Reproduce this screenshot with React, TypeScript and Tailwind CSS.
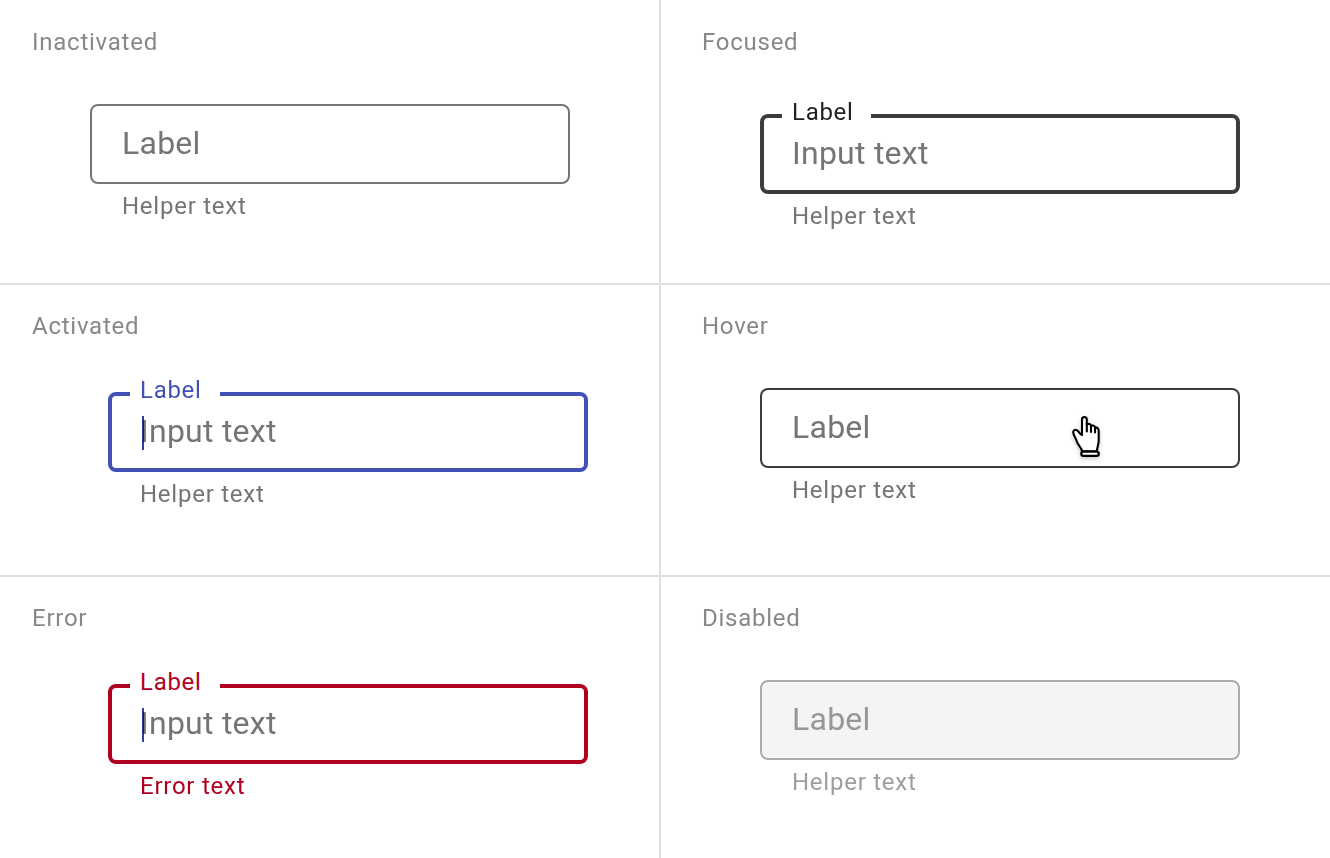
import type { ReactNode } from "react";
import { clsx } from "clsx";

type Tone = "inactive" | "focused" | "activated" | "hover" | "error" | "disabled";

const boxTone: Record<Tone, string> = {
  inactive: "border-2 border-[#757575]",
  focused: "border-4 border-[#3c3c3c]",
  activated: "border-4 border-[#3f51b5]",
  hover: "border-2 border-[#3c3c3c]",
  error: "border-4 border-[#b00020]",
  disabled: "border-2 border-[#acacac] bg-[#f4f4f4]",
};

const labelTone: Record<Tone, string> = {
  inactive: "",
  focused: "text-[#212121]",
  activated: "text-[#3f51b5]",
  hover: "",
  error: "text-[#b00020]",
  disabled: "",
};

const helperTone: Record<Tone, string> = {
  inactive: "text-[#757575]",
  focused: "text-[#757575]",
  activated: "text-[#757575]",
  hover: "text-[#757575]",
  error: "text-[#b00020]",
  disabled: "text-[#9e9e9e]",
};

function HandCursor() {
  return (
    <svg
      className="absolute top-[17px] left-[300px] h-[60px] w-[56px] drop-shadow-[0_2px_2px_rgba(0,0,0,0.22)]"
      viewBox="0 0 56 60"
      fill="#fff"
      stroke="#000"
      strokeWidth="2.1"
      strokeLinecap="round"
      strokeLinejoin="round"
    >
      <path d="M22 30V14.6C22 11.2 26.8 11.2 26.8 14.6V19.3C28.6 18.4 30.8 19 31 20.8C33 20 34.8 20.7 35 22.4C37.2 22.3 38.7 23.7 38.7 26V35.5C38.7 40.5 37 41.5 37 46.2H22C21.7 42.5 17.8 40.3 16.9 36.5C16.1 33.2 13.2 30 13.2 27.2C13.2 24.7 15.6 24.1 17.2 25.4C19.4 27 20 29.6 22 30Z" />
      <path d="M26.8 19V26.4M31 20.8V27M35 22.5V27.4" fill="none" />
      <rect x="21.3" y="46.7" width="17.4" height="4.2" rx="2.1" strokeWidth="2.3" />
    </svg>
  );
}

interface FieldProps {
  tone: Tone;
  text: string;
  helper: string;
  label?: string;
  notch?: string;
  caret?: boolean;
  children?: ReactNode;
}

function Field({ tone, text, helper, label, notch = "w-[90px]", caret, children }: FieldProps) {
  return (
    <div className="relative w-[480px]">
      <div className={clsx("flex h-20 items-start rounded-lg", boxTone[tone], label ? "pt-[11px] pl-7" : "pt-[13px] pl-[30px]")}>
        <span
          className={clsx(
            "text-[32px] leading-[48px] tracking-[0.25px]",
            tone === "disabled" ? "text-[#979797]" : "text-[#757575]",
          )}
        >
          {text}
        </span>
      </div>
      {label && (
        <span className={clsx("absolute top-[-18px] left-[22px] bg-white pl-2.5 text-2xl leading-8 tracking-[0.7px]", notch, labelTone[tone])}>
          {label}
        </span>
      )}
      {caret && <span className="absolute top-6 left-[34px] h-[34px] w-0.5 bg-[#303f9f] mix-blend-multiply" />}
      {children}
      <p className={clsx("mt-1.5 pl-8 text-2xl leading-8 tracking-[0.75px]", helperTone[tone])}>{helper}</p>
    </div>
  );
}

function Cell({ title, className, offset, children }: { title: string; className: string; offset: string; children: ReactNode }) {
  return (
    <section className={clsx("border-[#e0e0e0]", className)}>
      <h2 className="text-2xl leading-8 tracking-[0.75px] text-[#888888]">{title}</h2>
      <div className={offset}>{children}</div>
    </section>
  );
}

export default function App() {
  return (
    <main className="grid h-[858px] w-[1330px] grid-cols-[661px_669px] grid-rows-[285px_292px_281px] bg-white font-['Roboto',sans-serif]">
      <Cell title="Inactivated" className="border-r-2 border-b-2 pt-[26px] pl-8" offset="mt-[46px] ml-[58px]">
        <Field tone="inactive" text="Label" helper="Helper text" />
      </Cell>
      <Cell title="Focused" className="border-b-2 pt-[26px] pl-[41px]" offset="mt-14 ml-[58px]">
        <Field tone="focused" label="Label" notch="w-[89px]" text="Input text" helper="Helper text" />
      </Cell>
      <Cell title="Activated" className="border-r-2 border-b-2 pt-[25px] pl-8" offset="mt-[50px] ml-[76px]">
        <Field tone="activated" label="Label" text="Input text" helper="Helper text" caret />
      </Cell>
      <Cell title="Hover" className="border-b-2 pt-[25px] pl-[41px]" offset="mt-[46px] ml-[58px]">
        <Field tone="hover" text="Label" helper="Helper text">
          <HandCursor />
        </Field>
      </Cell>
      <Cell title="Error" className="border-r-2 pt-[25px] pl-8" offset="mt-[50px] ml-[76px]">
        <Field tone="error" label="Label" text="Input text" helper="Error text" caret />
      </Cell>
      <Cell title="Disabled" className="pt-[25px] pl-[41px]" offset="mt-[46px] ml-[58px]">
        <Field tone="disabled" text="Label" helper="Helper text" />
      </Cell>
    </main>
  );
}
